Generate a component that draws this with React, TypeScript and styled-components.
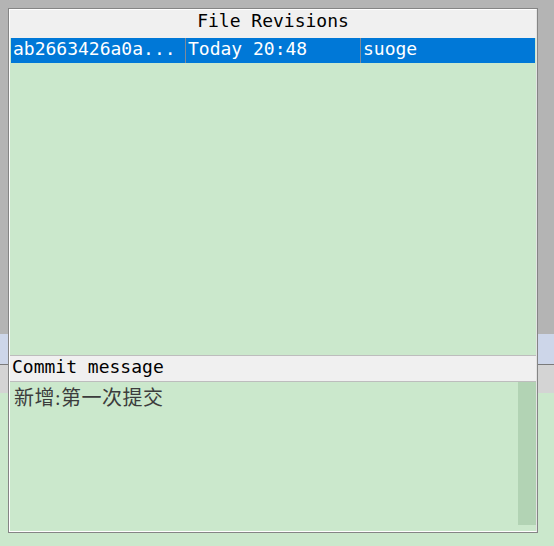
import styled, { createGlobalStyle } from "styled-components"

const GlobalStyle = createGlobalStyle`
	html, body {
		margin: 0;
		padding: 0;
	}

	body {
		width: 554px;
		height: 546px;
		overflow: hidden;
		font-family: "DejaVu Sans Mono", "Liberation Mono", monospace;
	}
`

const Page = styled.div`
	position: relative;
	width: 554px;
	height: 546px;

	display: flex;
	flex-direction: column;
`

const Band = styled.div<{ $height?: number; $color: string }>`
	flex: ${({ $height }) => ($height ? "none" : "1")};
	height: ${({ $height }) => ($height ? `${$height}px` : "auto")};

	background-color: ${({ $color }) => $color};
`

const Dialog = styled.div`
	position: absolute;
	top: 8px;
	left: 8px;
	width: 530px;
	height: 525px;
	box-sizing: border-box;

	border: 1px solid #858585;
	background-color: #ffffff;
`

const Inner = styled.div`
	height: 100%;
	box-sizing: border-box;

	display: flex;
	flex-direction: column;

	border: 1px solid #ffffff;
	border-right-color: #e3e3e3;
	background-color: #cbe8cc;
`

const Title = styled.div`
	height: 28px;
	box-sizing: border-box;

	background-color: #f0f0f0;
	color: #000000;
	font-size: 18px;
	line-height: 22px;
	text-align: center;
`

const List = styled.div`
	flex: 1;
	padding: 0 1px;

	background-color: #cbe8cc;
`

const Row = styled.div<{ $selected?: boolean }>`
	height: 25px;

	display: grid;
	grid-template-columns: 174px 175px 1fr;

	background-color: ${({ $selected }) => ($selected ? "#0078d7" : "transparent")};
	color: ${({ $selected }) => ($selected ? "#ffffff" : "#000000")};
`

const Cell = styled.div`
	padding-left: 2px;
	overflow: hidden;

	font-size: 18px;
	line-height: 22px;
	white-space: nowrap;

	& + & {
		border-left: 1px solid #7f8a99;
	}
`

const SectionHeader = styled.div`
	height: 27px;
	box-sizing: border-box;
	padding-left: 2px;

	border-top: 1px solid #bdbdbd;
	border-bottom: 1px solid #bdbdbd;
	background-color: #f0f0f0;
	color: #000000;
	font-size: 18px;
	line-height: 22px;
`

const MessageArea = styled.div`
	height: 149px;

	display: flex;

	background-color: #cbe8cc;
`

const MessageText = styled.div`
	flex: 1;
	padding: 4px 0 0 4px;

	color: #3c3c3c;
	font-family: "Liberation Serif", "Noto Sans CJK SC", serif;
	font-size: 20px;
	line-height: 24px;
	letter-spacing: 0.5px;
`

const Scrollbar = styled.div`
	width: 18px;
	height: 143px;

	background-color: #b2d3b4;
`

const App = () => {
	return (
		<>
			<GlobalStyle />
			<Page>
				<Band $height={334} $color="#b4b4b4" />
				<Band $height={30} $color="#cdd6e9" />
				<Band $height={1} $color="#7a7a7a" />
				<Band $height={28} $color="#d4d4d4" />
				<Band $color="#cbe8cc" />

				<Dialog>
					<Inner>
						<Title>File Revisions</Title>
						<List>
							<Row $selected>
								<Cell>ab2663426a0a...</Cell>
								<Cell>Today 20:48</Cell>
								<Cell>suoge</Cell>
							</Row>
						</List>
						<SectionHeader>Commit message</SectionHeader>
						<MessageArea>
							<MessageText>新增:第一次提交</MessageText>
							<Scrollbar />
						</MessageArea>
					</Inner>
				</Dialog>
			</Page>
		</>
	)
}

export default App
